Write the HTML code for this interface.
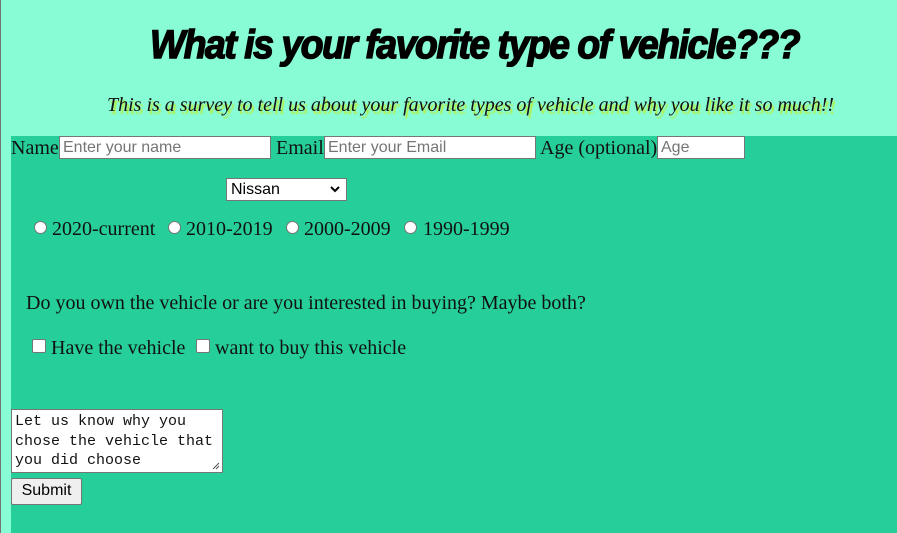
<!DOCTYPE html>
<html><head><style>
html,body{margin:0;padding:0;}
body{width:897px;height:533px;background:#88fcd4;position:relative;overflow:hidden;font-family:"Liberation Serif",serif;color:#111;}
.lb{position:absolute;left:0;top:0;width:1px;height:533px;background:#777;}
.green{position:absolute;left:11px;top:136px;width:886px;height:397px;background:#26cf99;}
.a{position:absolute;white-space:nowrap;}
h1{position:absolute;left:150px;top:23px;margin:0;font:italic 900 40px "Liberation Sans",sans-serif;letter-spacing:-1.5px;transform:scaleX(0.93);transform-origin:left;-webkit-text-stroke:1.5px #000;color:#000;white-space:nowrap;}
.sub{left:107px;top:94px;font-style:italic;font-size:20px;text-shadow:2px 3px 1px #b6f03c;}
.lbl{font-size:20px;}
.inp{position:absolute;height:23px;background:#fff;border:1px solid #767676;box-sizing:border-box;font:16px "Liberation Sans",sans-serif;color:#757575;padding:1px 3px;line-height:20px;}
.sel{position:absolute;left:226px;top:178px;width:121px;height:23px;background:#fff;border:1px solid #767676;box-sizing:border-box;font:16px "Liberation Sans",sans-serif;color:#000;padding:1px 4px;line-height:19px;}
.radio{position:absolute;width:13px;height:13px;border-radius:50%;background:#fff;border:1px solid #767676;box-sizing:border-box;}
.cb{position:absolute;width:14px;height:14px;border-radius:2px;background:#fff;border:1px solid #767676;box-sizing:border-box;}
.ta{position:absolute;left:11px;top:409px;width:212px;height:64px;background:#fff;border:1px solid #767676;box-sizing:border-box;font:15px "Liberation Mono",monospace;color:#111;padding:2px 3px;line-height:19.5px;white-space:pre;}
.btn{position:absolute;left:11px;top:478px;width:71px;height:27px;background:#efefef;border:1px solid #767676;border-radius:2px;box-sizing:border-box;font:16px "Liberation Sans",sans-serif;color:#000;text-align:center;line-height:24px;}
</style></head><body>
<div class="lb"></div>
<h1>What is your favorite type of vehicle???</h1>
<div class="a sub">This is a survey to tell us about your favorite types of vehicle and why you like it so much!!</div>
<div class="green"></div>
<div class="a lbl" style="left:11px;top:137px;">Name</div>
<div class="inp" style="left:59px;top:136px;width:212px;">Enter your name</div>
<div class="a lbl" style="left:276px;top:137px;">Email</div>
<div class="inp" style="left:324px;top:136px;width:212px;">Enter your Email</div>
<div class="a lbl" style="left:540px;top:137px;">Age (optional)</div>
<div class="inp" style="left:657px;top:136px;width:88px;">Age</div>
<div class="sel">Nissan<svg style="position:absolute;right:6px;top:7px" width="10" height="7" viewBox="0 0 10 7"><path d="M1 1l4 4 4-4" stroke="#000" stroke-width="2" fill="none"/></svg></div>
<div class="radio" style="left:34px;top:221px;"></div>
<div class="a lbl" style="left:52px;top:218px;">2020-current</div>
<div class="radio" style="left:168px;top:221px;"></div>
<div class="a lbl" style="left:186px;top:218px;">2010-2019</div>
<div class="radio" style="left:286px;top:221px;"></div>
<div class="a lbl" style="left:304px;top:218px;">2000-2009</div>
<div class="radio" style="left:404px;top:221px;"></div>
<div class="a lbl" style="left:423px;top:218px;">1990-1999</div>
<div class="a lbl" style="left:26px;top:292px;">Do you own the vehicle or are you interested in buying? Maybe both?</div>
<div class="cb" style="left:32px;top:339px;"></div>
<div class="a lbl" style="left:51px;top:337px;">Have the vehicle</div>
<div class="cb" style="left:196px;top:339px;"></div>
<div class="a lbl" style="left:215px;top:337px;">want to buy this vehicle</div>
<div class="ta">Let us know why you
chose the vehicle that
you did choose<svg style="position:absolute;right:2px;bottom:2px" width="8" height="8" viewBox="0 0 8 8"><path d="M7 1L1 7M7 4L4 7" stroke="#555" stroke-width="1"/></svg></div>
<div class="btn">Submit</div>
</body></html>
